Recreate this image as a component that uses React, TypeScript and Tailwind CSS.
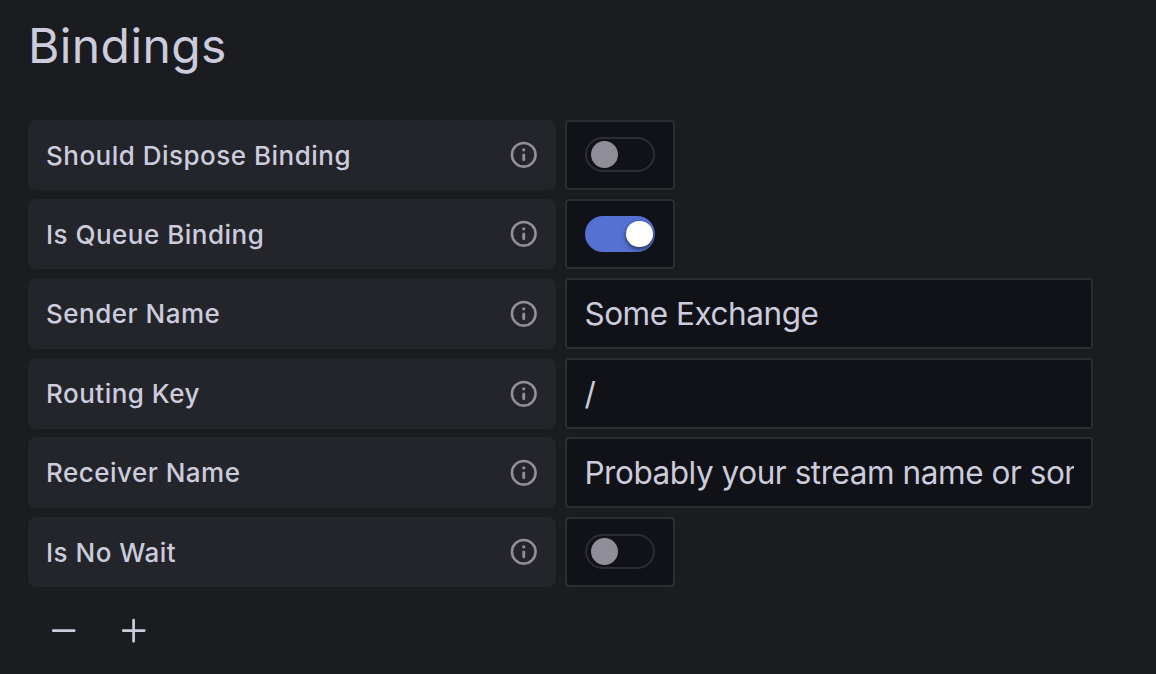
import React from "react";

const InfoIcon = () => (
  <svg width="31.5" height="31.5" viewBox="0 0 24 24" fill="#8f8e99">
    <path d="M12 2a10 10 0 1 0 10 10A10 10 0 0 0 12 2Zm0 18a8 8 0 1 1 8-8 8 8 0 0 1-8 8Zm0-9a1.1 1.1 0 0 0-1.1 1.1v3.8a1.1 1.1 0 0 0 2.2 0v-3.8a1.1 1.1 0 0 0-1.1-1.1Zm0-4a1.25 1.25 0 1 0 1.25 1.25A1.25 1.25 0 0 0 12 7Z" />
  </svg>
);

const Label = ({ text, lowered }: { text: string; lowered: boolean }) => (
  <div className="flex w-[528px] shrink-0 items-center justify-between rounded-[8px] bg-[#24252a] pr-[16.8px] pl-[18px] text-[26px] font-medium tracking-[0.49px] text-[#ccccdc]">
    <span className={lowered ? "pt-px" : ""}>{text}</span>
    <InfoIcon />
  </div>
);

const Toggle = ({ on }: { on: boolean }) => (
  <div className="flex w-[110px] items-center justify-center rounded-[4px] border-2 border-[#2c2d33] bg-[#111217]">
    <div className={on ? "flex h-9 w-[70px] items-center justify-end rounded-full bg-[#5571d1] pr-[2.3px]" : "flex h-[35px] w-[70px] items-center rounded-full border-2 border-[#2c2d33] pl-1"}>
      <div className={on ? "size-[26.5px] rounded-full bg-white shadow-[0_2px_4px_rgba(1,4,9,0.6)]" : "size-[26.5px] rounded-full bg-[#8e8d98]"} />
    </div>
  </div>
);

const Field = ({ value }: { value: string }) => (
  <div className="w-[528px] rounded-[4px] border-2 border-[#2c2d33] bg-[#111217] pr-[17px] pl-[17.4px]">
    <input
      readOnly
      value={value}
      className="block h-[67px] w-full bg-transparent text-[31.5px] tracking-[-0.45px] text-[#ccccdc] outline-none"
    />
  </div>
);

const rows: { label: string; value: string | boolean }[] = [
  { label: "Should Dispose Binding", value: false },
  { label: "Is Queue Binding", value: true },
  { label: "Sender Name", value: "Some Exchange" },
  { label: "Routing Key", value: "/" },
  { label: "Receiver Name", value: "Probably your stream name or something" },
  { label: "Is No Wait", value: false },
];

export default function App() {
  return (
    <main className="h-[674px] w-[1156px] overflow-hidden bg-[#1b1c20] px-7 pt-[15.6px] font-['Inter',sans-serif]">
      <h1 className="h-[104px] text-[48px] leading-[59px] tracking-[0.4px] text-[#ccccdc]">Bindings</h1>
      <div className="flex flex-col">
        {rows.map((r) => (
          <div key={r.label} className="h-[79.4px]">
            <div className={typeof r.value === "boolean" ? "flex h-[70px] gap-[9px]" : "flex h-[71px] gap-[9px]"}>
              <Label text={r.label} lowered={typeof r.value === "boolean"} />
              {typeof r.value === "boolean" ? <Toggle on={r.value} /> : <Field value={r.value} />}
            </div>
          </div>
        ))}
      </div>
      <div className="flex gap-[42px] pt-5 pl-[21px]">
        <svg width="28" height="28" viewBox="0 0 28 28" stroke="#ccccdc" strokeWidth="2.7" strokeLinecap="round"><path d="M4.2 14.6H25.3" /></svg>
        <svg width="28" height="28" viewBox="0 0 28 28" stroke="#ccccdc" strokeWidth="2.7" strokeLinecap="round"><path d="M4.2 14.6H25.3M14.6 4.2V25.3" /></svg>
      </div>
    </main>
  );
}
